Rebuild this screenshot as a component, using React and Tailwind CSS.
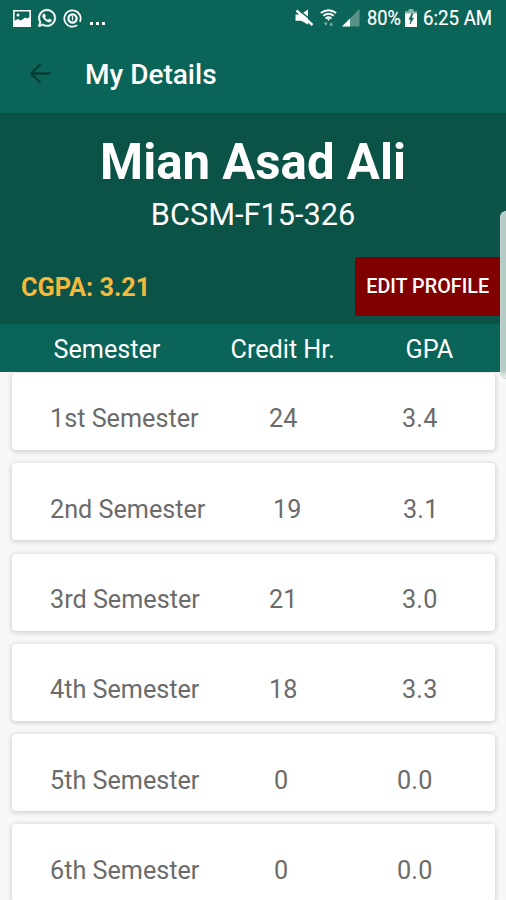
import { FaWhatsapp } from 'react-icons/fa';

const semesters = [
  { name: '1st Semester', credits: '24', gpa: '3.4', creditCol: 'w-[133px] pl-0' },
  { name: '2nd Semester', credits: '19', gpa: '3.1', creditCol: 'w-[134px] pl-[4px]' },
  { name: '3rd Semester', credits: '21', gpa: '3.0', creditCol: 'w-[133px] pl-0' },
  { name: '4th Semester', credits: '18', gpa: '3.3', creditCol: 'w-[133px] pl-0' },
  { name: '5th Semester', credits: '0', gpa: '0.0', creditCol: 'w-[128px] pl-[5px]' },
  { name: '6th Semester', credits: '0', gpa: '0.0', creditCol: 'w-[128px] pl-[5px]' },
];

function StatusBar() {
  return (
    <div className="flex h-9 items-center text-white">
      <svg className="ml-[13px] h-[17px] w-[18px]" viewBox="0 0 18 17">
        <path d="M.8 .8h16.400v15.400H.8z" fill="none" stroke="#fff" strokeWidth="1.600" />
        <path d="M1 11l4-2 3 1.500L12 7.500l2 1L17 7v9H1z" fill="#fff" />
        <circle cx="5" cy="5" r="1.500" fill="#fff" />
      </svg>
      <FaWhatsapp className="ml-[6px] size-[20px] stroke-white" strokeWidth="14" />
      <svg className="ml-[6px] size-[19px]" viewBox="0 0 20 20" fill="none" stroke="currentColor">
        <path d="M17.800 6.500A8.600 8.600 0 1 0 15 17" strokeWidth="1.800" />
        <path d="M12.500 1.800A8.600 8.600 0 0 1 17.800 13.500" strokeWidth="1.800" />
        <circle cx="10" cy="10" r="4.300" strokeWidth="2.400" />
        <path d="M10 7.500v4.500" strokeWidth="1.400" />
      </svg>
      <span className="ml-[8px] flex gap-[3px] pt-[11px]">
        <i className="size-[3px] bg-white" />
        <i className="size-[3px] bg-white" />
        <i className="size-[3px] bg-white" />
      </span>
      <svg className="ml-[190px] h-[18px] w-[19px]" viewBox="0 0 19 18" fill="currentColor">
        <path d="M.5 5.500h5L13 .5v15L6 11.800H.5z" />
        <path d="M3 .2L18.500 13.200" stroke="#0a6458" strokeWidth="1.500" />
        <path d="M1.500 1.500L17.500 16" stroke="currentColor" strokeWidth="2.400" />
      </svg>
      <svg className="ml-[6px] h-[18px] w-[17px]" viewBox="0 0 17 18" fill="none" stroke="currentColor">
        <path d="M.8 4Q8.500-1.500 16.200 4M3.300 6.800Q8.500 2.800 13.700 6.800M5.600 9.400Q8.500 7 11.400 9.400" strokeWidth="1.900" />
        <path d="M6.800 9.500h3.400L8.500 12z" fill="currentColor" stroke="none" />
        <path d="M4 13.500h3.600L5.800 17zM9.400 16.500H13L11.200 13z" fill="#86b3ac" stroke="none" />
      </svg>
      <svg className="ml-[5px] h-[18px] w-[18px]" viewBox="0 0 18 18">
        <path d="M0 17.500L17.500 0v17.500z" fill="#579388" />
        <path d="M0 17.500L8 9.500v8z" fill="#fff" />
      </svg>
      <span className="ml-[7px] w-[35px] origin-left scale-x-[.87] text-[21px] leading-none [-webkit-text-stroke:0.2px_white]">80%</span>
      <svg className="ml-[3px] h-[18px] w-[12px]" viewBox="0 0 12 18">
        <path d="M3.500 0h5v2.200H12V6H0V2.200h3.500z" fill="#86b3ac" />
        <path d="M0 4.500h12V18H0z" fill="#fff" />
        <path d="M6.800 4.500L4 10.500h2L5 15l3.500-6h-2L7.800 4.500z" fill="#0a6458" stroke="#0a6458" strokeWidth=".6" />
      </svg>
      <span className="ml-[6px] origin-left scale-x-[.89] whitespace-nowrap text-[21px] leading-none [-webkit-text-stroke:0.2px_white]">6:25 AM</span>
    </div>
  );
}

function SemesterCard({ semester }) {
  return (
    <div className="flex h-[77px] shrink-0 items-center rounded-[4px] bg-white pl-[38px] pt-[15.500px] text-[25.200px] text-[#6b6b6b] shadow-[0_1px_5px_1px_rgba(0,0,0,0.16)]">
      <span className="w-[219px]">{semester.name}</span>
      <span className={semester.creditCol}>{semester.credits}</span>
      <span className="tracking-[0.2px]">{semester.gpa}</span>
    </div>
  );
}

export default function App() {
  return (
    <div className="relative flex h-[900px] w-[506px] flex-col overflow-hidden bg-[#f8f8f8] font-['Roboto',sans-serif]">
      <header className="h-[113px] shrink-0 bg-[#0a6458]">
        <StatusBar />
        <div className="flex h-[75px] items-center">
          <svg className="ml-[29px] h-[21px] w-[23px]" viewBox="0 0 23 22" fill="none" stroke="#073c35" strokeWidth="2.400">
            <path d="M22 11H2M11.500 1L1.800 11l9.700 10" />
          </svg>
          <h1 className="ml-[33px] pt-[3px] text-[28px] font-medium leading-none text-white">My Details</h1>
        </div>
      </header>

      <section className="flex h-[211px] shrink-0 flex-col bg-[#0b5247] text-white">
        <h2 className="mt-[20px] text-center text-[49.200px] font-bold leading-[58px]">Mian Asad Ali</h2>
        <p className="mt-[6px] text-center text-[30.700px] leading-[36px]">BCSM-F15-326</p>
        <div className="mt-[24px] flex h-[59px] items-center justify-between pl-[21px]">
          <span className="pt-[2px] text-[25.300px] font-bold text-[#f4b93a]">CGPA: 3.21</span>
          <button className="flex h-[59px] w-[151px] items-center justify-center rounded-[2px] bg-[#800000] pr-[5px]">
            <span className="scale-x-[.95] whitespace-nowrap pt-[1px] text-[20.800px] font-medium">EDIT PROFILE</span>
          </button>
        </div>
      </section>

      <div className="z-10 flex h-[48px] shrink-0 items-center bg-[#0a6458] pl-[53.500px] pt-[4px] text-[25.200px] text-white">
        <span className="w-[177px]">Semester</span>
        <span className="w-[175px]">Credit Hr.</span>
        <span>GPA</span>
      </div>

      <main className="flex flex-col gap-[13.300px] pl-[12px] pr-[11px] pt-[1px]">
        {semesters.map((semester) => (
          <SemesterCard key={semester.name} semester={semester} />
        ))}
      </main>

      {/* edge panel handle */}
      <div className="absolute left-[500px] top-[211px] z-20 h-[168px] w-[12px] rounded-[6px] border border-[#cfdcd9]/60 bg-linear-to-b from-[#b4cbc6] from-95% to-[#eef1f0]" />
    </div>
  );
}
